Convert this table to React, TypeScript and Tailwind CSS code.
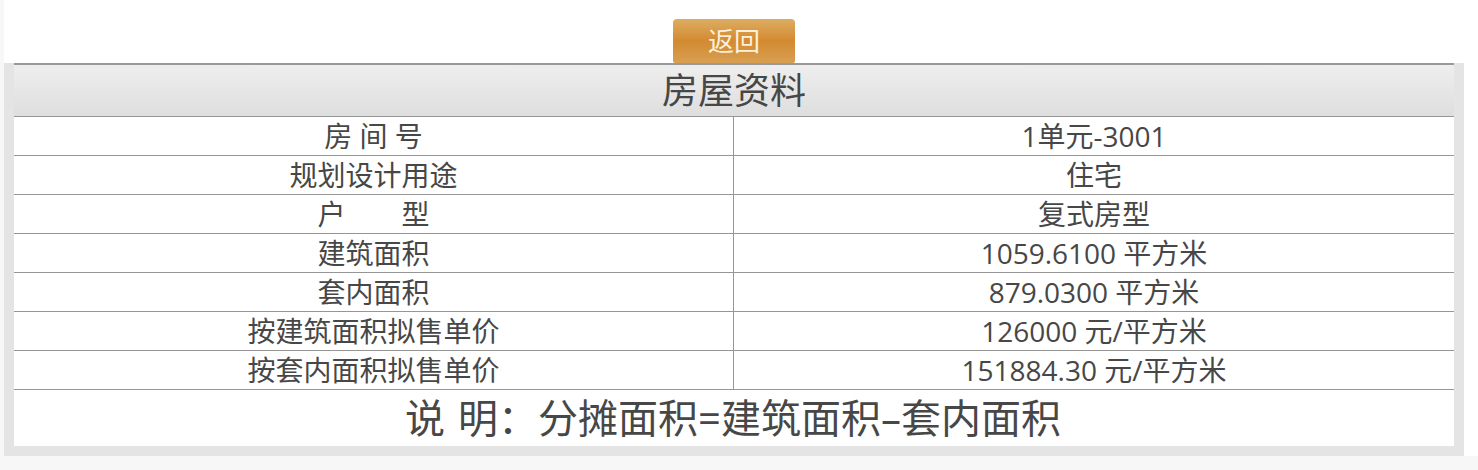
import React from "react";

const rows: [string, string][] = [
  ["房 间 号", "1单元-3001"],
  ["规划设计用途", "住宅"],
  ["户\u3000\u3000型", "复式房型"],
  ["建筑面积", "1059.6100 平方米"],
  ["套内面积", "879.0300 平方米"],
  ["按建筑面积拟售单价", "126000 元/平方米"],
  ["按套内面积拟售单价", "151884.30 元/平方米"],
];

export default function App() {
  return (
    <div
      className="w-[1478px] h-[470px] bg-[#f7f7f7] text-[#474747]"
      style={{ fontFamily: '"Open Sans", "Noto Sans CJK SC", sans-serif' }}
    >
      <div className="ml-[4px] h-[456px] bg-white pr-[14px] flex flex-col">
        <div className="flex justify-center pt-[19px]">
          <div className="w-[122px] h-[44px] rounded-t-[4px] rounded-b-[2px] bg-[linear-gradient(to_bottom,#ddad62,#d38a31_50%,#d89f52)] flex items-center justify-center text-[26px] leading-none text-[#fbf0dc]">
            返回
          </div>
        </div>
        <div className="flex-1 bg-[#e4e4e4] px-[10px] pb-[10px] flex flex-col">
          <div className="flex-1 bg-white border-t-2 border-[#999999] flex flex-col">
            <div className="h-[52px] border-b border-[#969696] bg-[linear-gradient(to_bottom,#efeeee,#dedede)] flex items-center justify-center text-[36px] leading-none">
              房屋资料
            </div>
            {rows.map(([k, v]) => (
              <div key={k} className="grid grid-cols-2 h-[39px] border-b border-[#969696]">
                <div className="flex items-center justify-center border-r border-[#969696] text-[28px] leading-none whitespace-pre">
                  {k}
                </div>
                <div className="flex items-center justify-center text-[28px] leading-none whitespace-pre">
                  {v}
                </div>
              </div>
            ))}
            <div className="flex-1 flex items-center justify-center text-[40px] leading-none whitespace-pre">
              <span className="-ml-[2px]">说</span>
              <span className="inline-block w-[13px]" />
              <span>明：分摊面积=建筑面积–套内面积</span>
            </div>
          </div>
        </div>
      </div>
    </div>
  );
}
